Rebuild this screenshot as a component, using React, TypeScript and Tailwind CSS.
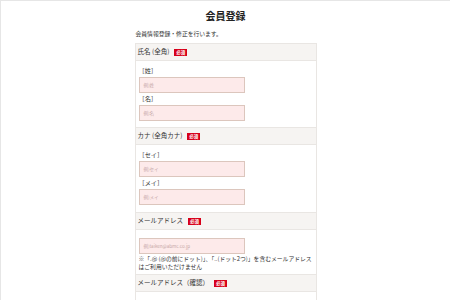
import React from "react";

const font = { fontFamily: '"Noto Sans CJK JP", "Noto Sans", sans-serif' };

function Badge() {
  return (
    <span className="ml-[5px] inline-flex h-[7px] w-[13px] items-center justify-center bg-[#d7001a] text-[4.5px] font-bold leading-none text-white">
      必須
    </span>
  );
}

function Header({ label }: { label: string }) {
  return (
    <div className="flex h-[18px] items-center border-y border-[#e9e6e3] bg-[#f6f4f2] pl-[2px] text-[6.5px] text-[#333]">
      <span>{label}</span>
      <Badge />
    </div>
  );
}

function Input({ placeholder }: { placeholder: string }) {
  return (
    <div className="flex h-[16px] w-[106px] items-center border border-[#dcc6bd] bg-[#fdeaea] pl-[4px] text-[4.5px] text-[#c7a9a9]">
      {placeholder}
    </div>
  );
}

function Label({ text }: { text: string }) {
  return <div className="h-[12px] text-[6.2px] leading-[12px] text-[#333]">{text}</div>;
}

export default function App() {
  return (
    <div
      className="h-[300px] w-[450px] overflow-hidden border-l border-t border-[#e6e6e6] bg-white"
      style={font}
    >
      <h1 className="pt-[9px] text-center text-[10px] font-bold leading-[11px] text-[#222]">
        会員登録
      </h1>
      <div className="mx-auto w-[182px]">
        <p className="mt-[8px] pl-[1px] text-[5.8px] leading-[10px] text-[#333]">
          会員情報登録・修正を行います。
        </p>
        <div className="mt-[4px] border-x border-[#e9e6e3]">
          <Header label="氏名 (全角)" />
          <div className="px-[3px] pb-[6px] pt-[4px]">
            <Label text="［姓］" />
            <Input placeholder="例)姓" />
            <Label text="［名］" />
            <Input placeholder="例)名" />
          </div>
          <Header label="カナ (全角カナ)" />
          <div className="px-[3px] pb-[7px] pt-[4px]">
            <Label text="［セイ］" />
            <Input placeholder="例)セイ" />
            <Label text="［メイ］" />
            <Input placeholder="例)メイ" />
          </div>
          <Header label="メールアドレス" />
          <div className="px-[3px] pb-[3px] pt-[8px]">
            <Input placeholder="例)taiken@abmc.co.jp" />
            <p className="mt-[1px] text-[5.8px] leading-[8px] text-[#333]">
              ※「.@ (@の前にドット)」、「..(ドット2つ)」を含むメールアドレス
              <br />
              はご利用いただけません
            </p>
          </div>
          <Header label="メールアドレス（確認）" />
          <div className="h-[40px]" />
        </div>
      </div>
    </div>
  );
}
